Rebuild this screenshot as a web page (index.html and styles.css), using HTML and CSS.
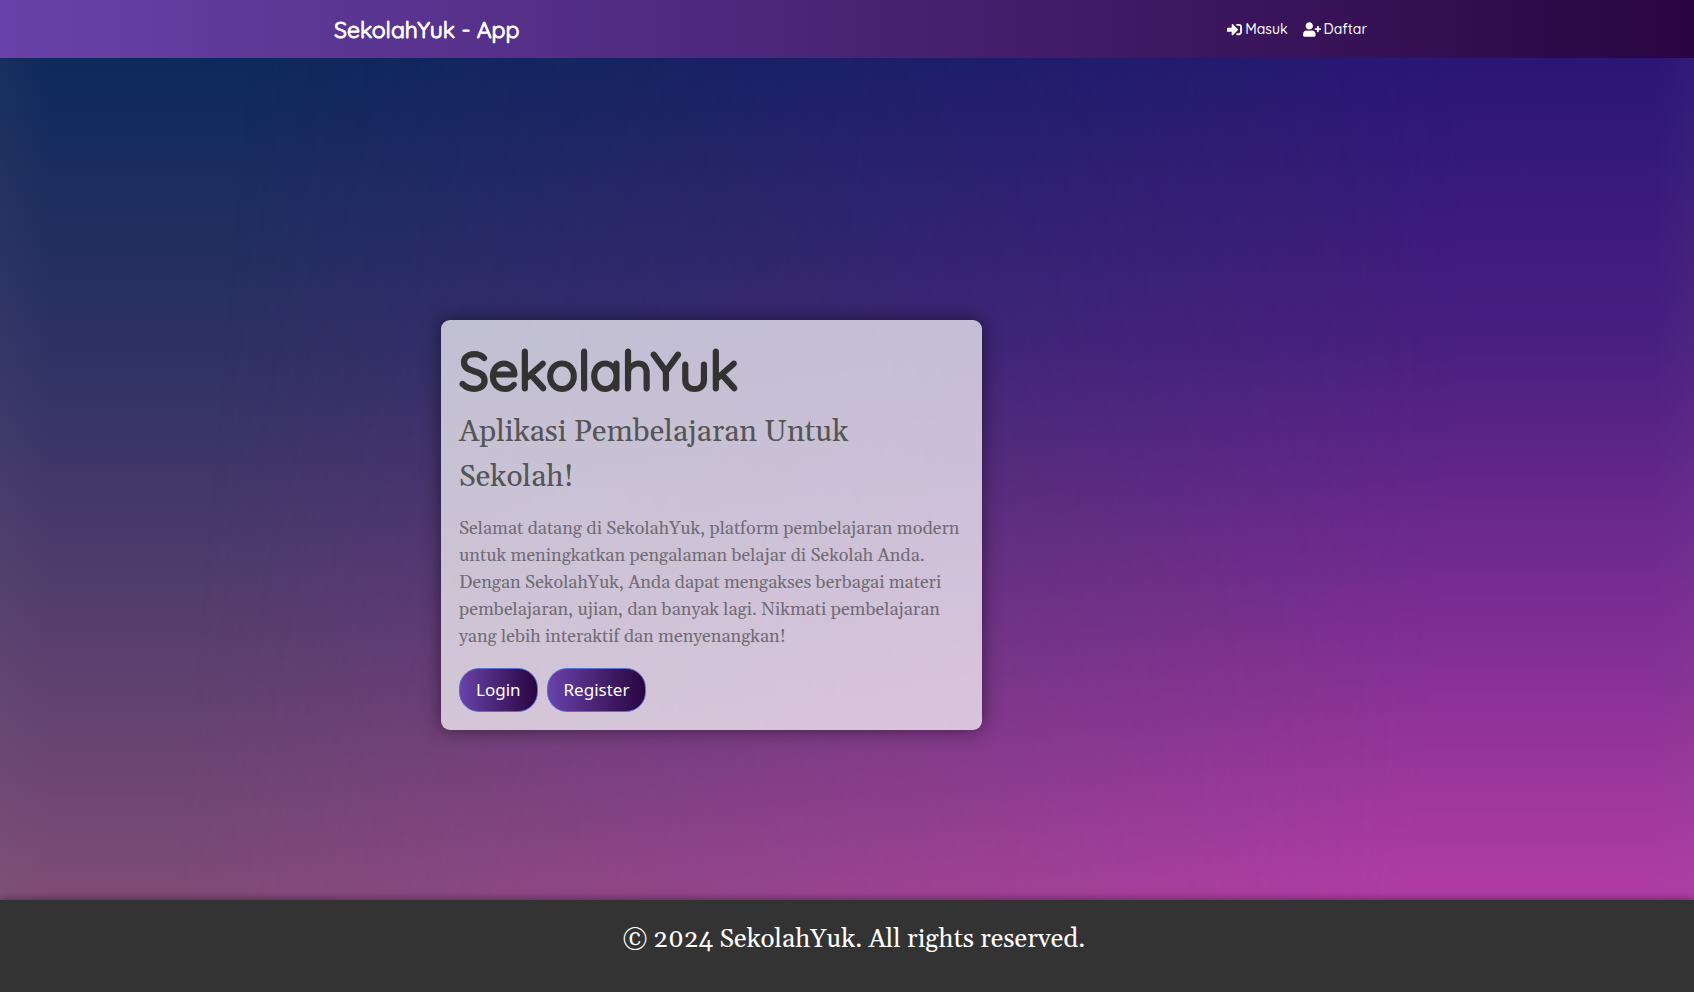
FILE: index.html
```html
<!DOCTYPE html>
<html lang="id">
<head>
<meta charset="utf-8">
<meta name="viewport" content="width=device-width, initial-scale=1">
<title>SekolahYuk - App</title>
<link rel="stylesheet" href="styles.css">
</head>
<body>
<header class="navbar">
  <nav class="navbar-inner">
    <a class="brand" href="#">SekolahYuk - App</a>
    <div class="nav-links">
      <a class="nav-link" href="#masuk">
        <svg class="icon" viewBox="0 0 512 512" width="15" height="15" aria-hidden="true"><path d="M416 448h-84c-6.600 0-12-5.400-12-12v-40c0-6.600 5.400-12 12-12h84c17.700 0 32-14.300 32-32V160c0-17.700-14.300-32-32-32h-84c-6.600 0-12-5.400-12-12V76c0-6.600 5.400-12 12-12h84c53 0 96 43 96 96v192c0 53-43 96-96 96zm-47-201L201 79c-15-15-41-4.500-41 17v96H24c-13.300 0-24 10.700-24 24v96c0 13.300 10.700 24 24 24h136v96c0 21.500 26 32 41 17l168-168c9.300-9.400 9.300-24.600 0-34z"/></svg>
        <span>Masuk</span>
      </a>
      <a class="nav-link" href="#daftar">
        <svg class="icon" viewBox="0 0 640 512" width="18" height="15" aria-hidden="true"><path d="M624 208h-64v-64c0-8.800-7.200-16-16-16h-32c-8.800 0-16 7.200-16 16v64h-64c-8.800 0-16 7.200-16 16v32c0 8.800 7.200 16 16 16h64v64c0 8.800 7.200 16 16 16h32c8.800 0 16-7.200 16-16v-64h64c8.800 0 16-7.200 16-16v-32c0-8.800-7.200-16-16-16zm-400 48c70.700 0 128-57.300 128-128S294.700 0 224 0 96 57.300 96 128s57.300 128 128 128zm89.600 32h-16.700c-22.200 10.200-46.900 16-72.900 16s-50.600-5.800-72.900-16h-16.700C60.200 288 0 348.200 0 422.400V464c0 26.500 21.500 48 48 48h352c26.500 0 48-21.500 48-48v-41.600c0-74.200-60.200-134.400-134.400-134.400z"/></svg>
        <span>Daftar</span>
      </a>
    </div>
  </nav>
</header>
<main class="hero">
  <div class="hero-inner">
    <section class="card">
      <h1 class="title">SekolahYuk</h1>
      <p class="subtitle">Aplikasi Pembelajaran Untuk Sekolah!</p>
      <p class="lead">Selamat datang di SekolahYuk, platform pembelajaran modern untuk meningkatkan pengalaman belajar di Sekolah Anda. Dengan SekolahYuk, Anda dapat mengakses berbagai materi pembelajaran, ujian, dan banyak lagi. Nikmati pembelajaran yang lebih interaktif dan menyenangkan!</p>
      <div class="actions">
        <button class="btn" type="button">Login</button>
        <button class="btn" type="button">Register</button>
      </div>
    </section>
  </div>
</main>
<footer class="footer">
  <p class="copyright">© 2024 SekolahYuk. All rights reserved.</p>
</footer>
</body>
</html>
```
FILE: styles.css
```css
* {
  box-sizing: border-box;
}

body {
  margin: 0;
  min-height: 100vh;
  display: flex;
  flex-direction: column;
  font-family: Georgia, Gelasio, "Liberation Serif", serif;
}

.navbar {
  background: linear-gradient(to right, #6842a8, #2a0541);
}

.navbar-inner {
  display: flex;
  align-items: center;
  justify-content: space-between;
  max-width: 1040px;
  min-height: 58px;
  margin: 0 auto;
  padding-left: 7px;
  font-family: Quicksand, Lato, sans-serif;
}

.brand {
  color: #fff;
  font-size: 23px;
  font-weight: 400;
  text-decoration: none;
  -webkit-text-stroke: 1px currentColor;
}

.nav-links {
  display: flex;
  gap: 15px;
}

.nav-link {
  display: flex;
  align-items: center;
  gap: 3px;
  color: #fff;
  font-size: 14px;
  font-weight: 500;
  line-height: 18px;
  text-decoration: none;
}

.icon {
  fill: currentColor;
}

.hero {
  position: relative;
  z-index: 0;
  flex: 1;
  display: flex;
  align-items: center;
  padding: 92px 16px 0;
  background: linear-gradient(#0e295b, #313265 37%, #5a3f6e 70%, #804c77);
}

.hero::before {
  content: "";
  position: absolute;
  inset: 0;
  z-index: -1;
  background: linear-gradient(#2a1676, #4b1f82 35%, #8a3197 75%, #b23da6);
  -webkit-mask-image: linear-gradient(95deg, transparent 14%, #000 84%);
  mask-image: linear-gradient(95deg, transparent 14%, #000 84%);
}

.hero::after {
  content: "";
  position: absolute;
  inset: 0;
  z-index: -1;
  background: linear-gradient(to right, rgba(120, 120, 140, 0.08), transparent 50px, transparent calc(100% - 40px), rgba(120, 120, 140, 0.06));
}

.hero-inner {
  width: 100%;
  max-width: 812px;
  margin: 0 auto;
}

.card {
  max-width: 541px;
  padding: 18px;
  border-radius: 9px;
  background: rgba(255, 255, 255, 0.7);
  box-shadow: 0 0 18px rgba(0, 0, 0, 0.5);
}

.title {
  margin: 0 0 8px;
  color: #333;
  font-family: Quicksand, Lato, sans-serif;
  font-size: 53px;
  font-weight: 400;
  line-height: 64px;
  -webkit-text-stroke: 3px currentColor;
}

.subtitle {
  margin: 0 0 15px;
  color: #555;
  font-size: 30px;
  line-height: 45px;
}

.lead {
  margin: 0 0 18px;
  color: #706c74;
  font-size: 18px;
  line-height: 27px;
}

.actions {
  display: flex;
  gap: 9px;
}

.btn {
  padding: 9px 16px;
  border: 1px solid #5570d0;
  border-radius: 20px;
  background: linear-gradient(to right, #6842a8, #2a0541);
  color: #fff;
  font-family: "Segoe UI", "Noto Sans", sans-serif;
  font-size: 17px;
  line-height: 24px;
}

.footer {
  position: relative;
  padding: 22px 14px 34px 28px;
  background: #333;
  box-shadow: 0 0 9px rgba(0, 0, 0, 0.5);
  text-align: center;
}

.copyright {
  margin: 0;
  color: #fff;
  font-size: 26px;
  line-height: 36px;
}
```
